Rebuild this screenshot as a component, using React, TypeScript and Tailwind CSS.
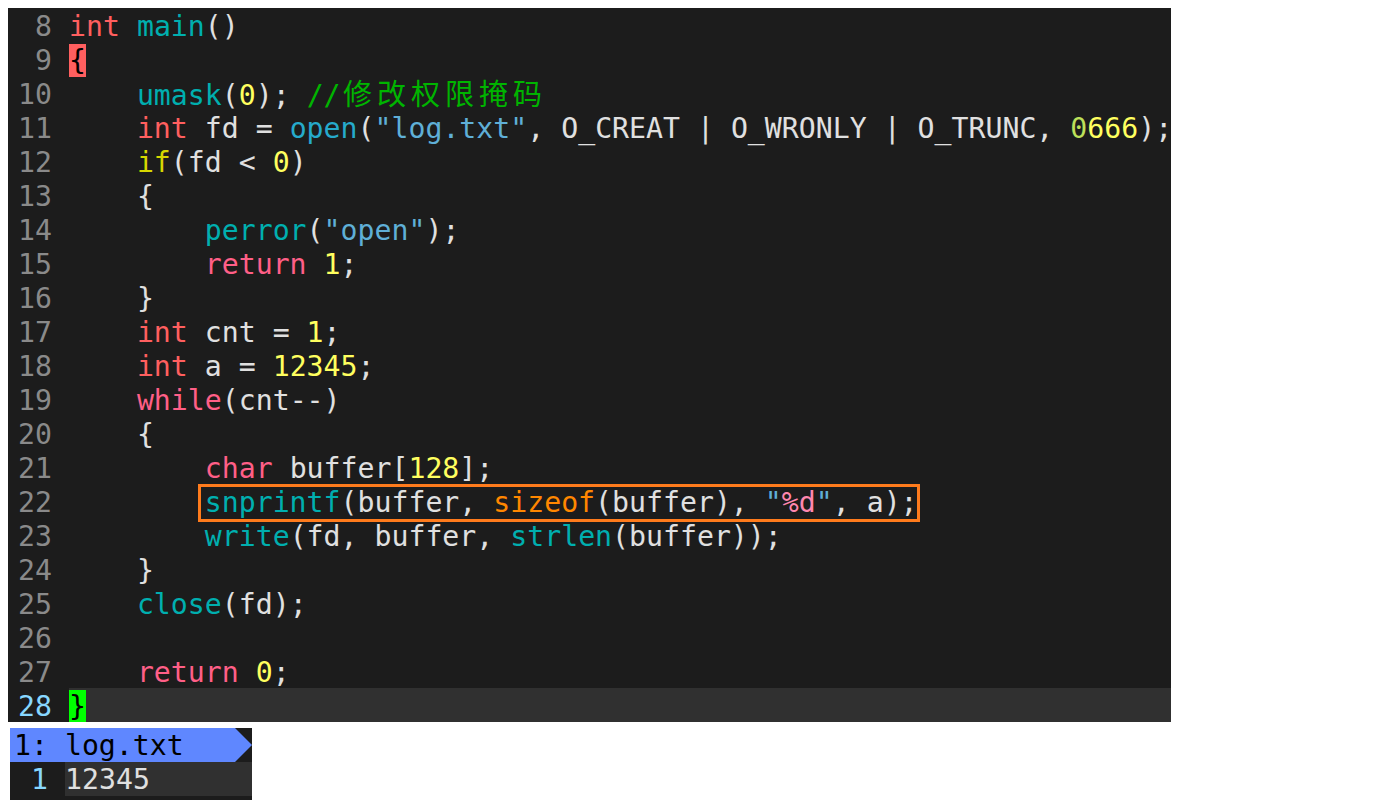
import React from 'react';

type Seg = [string, string?];

const C = {
  txt: 'text-[#e0e0e0]',
  int: 'text-[#ff5f5f]',
  kw: 'text-[#ff5f87]',
  fn: 'text-[#00afaf]',
  open: 'text-[#26aacb]',
  str: 'text-[#5fafd7]',
  num: 'text-[#ffff5f]',
  oct: 'text-[#bde05a]',
  cond: 'text-[#d7d700]',
  size: 'text-[#ff8700]',
  fmt: 'text-[#ff87af]',
  cmt: 'text-[#00b400]',
};

const code: { n: number; segs: Seg[] }[] = [
  { n: 8, segs: [['int', C.int], [' '], ['main', C.fn], ['()']] },
  { n: 9, segs: [] },
  { n: 10, segs: [['    '], ['umask', C.fn], ['('], ['0', C.num], ['); '], ['//', C.cmt]] },
  {
    n: 11,
    segs: [
      ['    '], ['int', C.int], [' fd = '], ['open', C.open], ['('], ['"log.txt"', C.str],
      [', O_CREAT | O_WRONLY | O_TRUNC, '], ['0', C.oct], ['666', C.num], [');'],
    ],
  },
  { n: 12, segs: [['    '], ['if', C.cond], ['(fd < '], ['0', C.num], [')']] },
  { n: 13, segs: [['    {']] },
  { n: 14, segs: [['        '], ['perror', C.fn], ['('], ['"open"', C.str], [');']] },
  { n: 15, segs: [['        '], ['return', C.kw], [' '], ['1', C.num], [';']] },
  { n: 16, segs: [['    }']] },
  { n: 17, segs: [['    '], ['int', C.int], [' cnt = '], ['1', C.num], [';']] },
  { n: 18, segs: [['    '], ['int', C.int], [' a = '], ['12345', C.num], [';']] },
  { n: 19, segs: [['    '], ['while', C.kw], ['(cnt--)']] },
  { n: 20, segs: [['    {']] },
  { n: 21, segs: [['        '], ['char', C.kw], [' buffer['], ['128', C.num], ['];']] },
  {
    n: 22,
    segs: [
      ['        '], ['snprintf', C.fn], ['(buffer, '], ['sizeof', C.size], ['(buffer), '],
      ['"', C.str], ['%d', C.fmt], ['"', C.str], [', a);'],
    ],
  },
  { n: 23, segs: [['        '], ['write', C.fn], ['(fd, buffer, '], ['strlen', C.fn], ['(buffer));']] },
  { n: 24, segs: [['    }']] },
  { n: 25, segs: [['    '], ['close', C.fn], ['(fd);']] },
  { n: 26, segs: [] },
  { n: 27, segs: [['    '], ['return', C.kw], [' '], ['0', C.num], [';']] },
  { n: 28, segs: [] },
];

const comment = '修改权限掩码';

const mono = "font-['DejaVu_Sans_Mono','Noto_Sans_CJK_SC',monospace]";

export default function App() {
  return (
    <div className={`min-h-[804px] w-[1397px] bg-white ${mono} text-[28.2px] leading-[34px]`}>
      <div className="h-[8px]" />
      <div className="ml-[8px] w-[1163px] bg-[#1c1c1c] overflow-hidden">
        {code.map((line) => {
          const current = line.n === 28;
          return (
            <div key={line.n} className="flex h-[34px]">
              <div
                className={`w-[61px] shrink-0 pt-[2px] pr-[17px] text-right ${
                  current ? 'text-[#87d7ff]' : 'text-[#8a8a8a]'
                }`}
              >
                {line.n}
              </div>
              <div
                className={`relative flex-1 pt-[2px] whitespace-pre ${C.txt} ${current ? 'bg-[#303030]' : ''}`}
              >
                {line.n === 9 && <span className="bg-[#ff5f5f] text-black">{'{'}</span>}
                {line.n === 28 && <span className="bg-[#00ff00] text-black">{'}'}</span>}
                {line.segs.map((s, i) => (
                  <span key={i} className={s[1] ?? ''}>
                    {s[0]}
                  </span>
                ))}
                {line.n === 10 &&
                  comment.split('').map((ch, i) => (
                    <span key={i} className={`inline-block w-[34px] text-center text-[29px] ${C.cmt}`}>
                      {ch}
                    </span>
                  ))}
                {line.n === 22 && (
                  <div className="absolute left-[129px] top-0 h-[38px] w-[722px] border-[3px] border-[#ff7b1c]" />
                )}
              </div>
            </div>
          );
        })}
      </div>

      <div className="ml-[10px] mt-[6px] w-[242px] bg-[#1c1c1c] pb-[4px]">
        <div className="flex h-[34px]">
          <div className="w-[225px] bg-[#5f87ff] pl-[4px] pt-[1px] whitespace-pre text-black">1: log.txt</div>
          <svg width="17" height="34" viewBox="0 0 17 34" className="block">
            <polygon points="0,0 17,17 0,34" fill="#5f87ff" />
          </svg>
        </div>
        <div className="flex h-[34px]">
          <div className="w-[55px] shrink-0 pt-[1px] pr-[17px] text-right text-[#87d7ff]">1</div>
          <div className="flex-1 bg-[#303030] pt-[1px] text-[#e0e0e0]">12345</div>
        </div>
      </div>
    </div>
  );
}
